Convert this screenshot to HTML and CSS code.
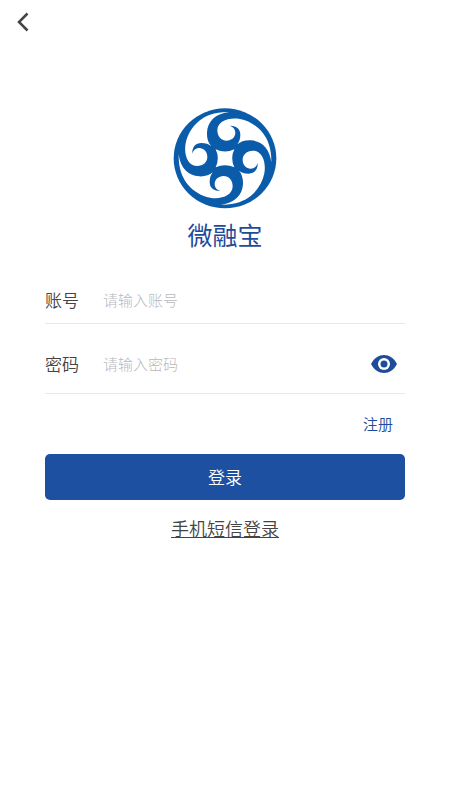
FILE: index.html
```html
<!DOCTYPE html>
<html lang="zh-CN">
<head>
    <meta charset="UTF-8">
    <meta name="viewport" content="width=device-width, initial-scale=1">
    <title>微融宝</title>
    <link rel="stylesheet" href="styles.css">
</head>
<body>

<header class="topbar">
    <button type="button" class="back" aria-label="返回">
        <svg viewBox="0 0 12 20" width="12" height="20"><path d="M10.5 1.5 L2 10 L10.5 18.5"/></svg>
    </button>
</header>

<main class="login">
    <div class="brand">
        <svg class="logo" viewBox="0 0 312 303" aria-hidden="true">
            <defs>
                <path id="swirl" d="M12 -139 C-30 -140 -58 -128 -77 -113 C-100 -94 -113 -70 -118 -45 C-124 -12 -112 23 -84 23 C-65 23 -53 11 -53 -4 C-53 -20 -64 -31 -77 -31 C-88 -31 -95 -24 -98 -14 C-99 -34 -88 -46 -71 -46 C-58 -46 -49 -42 -42 -37 C-50 -46 -55 -60 -54 -78 C-52 -110 -30 -134 12 -139 Z"/>
            </defs>
            <g transform="translate(156 151)">
                <ellipse rx="154" ry="150" fill="#0a5cab"/>
                <g fill="#fff">
                    <use href="#swirl"/>
                    <use href="#swirl" transform="rotate(90)"/>
                    <use href="#swirl" transform="rotate(180)"/>
                    <use href="#swirl" transform="rotate(270)"/>
                    <path d="M-28 -27 Q0 -14 28 -27 Q15 0 28 27 Q0 14 -28 27 Q-15 0 -28 -27 Z"/>
                </g>
            </g>
        </svg>
        <h1>微融宝</h1>
    </div>

    <form>
        <div class="field">
            <label for="account">账号</label>
            <input type="text" id="account" placeholder="请输入账号">
        </div>
        <div class="field field-password">
            <label for="password">密码</label>
            <input type="password" id="password" placeholder="请输入密码">
            <button type="button" class="eye" aria-label="显示密码">
                <svg viewBox="0 0 26 18" width="26" height="18">
                    <path d="M0 9 C3 3 8 0 13 0 C18 0 23 3 26 9 C23 15 18 18 13 18 C8 18 3 15 0 9 Z" fill="#1f4b9b"/>
                    <circle cx="13" cy="9" r="6" fill="#fff"/>
                    <circle cx="13" cy="9" r="3.5" fill="#1f4b9b"/>
                </svg>
            </button>
        </div>
        <div class="links">
            <a href="#">注册</a>
        </div>
        <button type="submit" class="submit">登录</button>
    </form>

    <a href="#" class="sms">手机短信登录</a>
</main>

</body>
</html>
```
FILE: styles.css
```css
* {
    box-sizing: border-box;
}
body {
    margin: 0;
    background: #fff;
    color: #444;
    font-family: "Noto Sans CJK SC", sans-serif;
    font-weight: 350;
}
button {
    padding: 0;
    border: none;
    background: none;
    font-family: inherit;
    font-weight: inherit;
    cursor: pointer;
}
a {
    color: inherit;
    text-decoration: none;
}
svg {
    display: block;
}
.topbar {
    display: flex;
    align-items: center;
    height: 44px;
    padding: 0 17px;
}
.back path {
    fill: none;
    stroke: #444;
    stroke-width: 2.5;
}
.login {
    display: flex;
    flex-direction: column;
    align-items: center;
    padding: 64px 45px 40px;
}
.brand {
    display: flex;
    flex-direction: column;
    align-items: center;
}
.logo {
    width: 104px;
    height: 101px;
}
h1 {
    margin: 7px 0 0;
    font-size: 25px;
    line-height: 36px;
    font-weight: 400;
    color: #1f4b9b;
}
form {
    width: 100%;
    margin-top: 25px;
}
.field {
    display: flex;
    align-items: center;
    height: 47px;
    border-bottom: 1px solid #e8e8e8;
}
.field-password {
    height: 70px;
    padding: 0 8px 12px 0;
    align-items: flex-end;
}
.field label {
    width: 58px;
    font-size: 17px;
    line-height: 34px;
}
.field input {
    flex: 1;
    min-width: 0;
    height: 34px;
    padding: 0 0 2px;
    border: none;
    outline: none;
    background: none;
    color: #444;
    font-family: inherit;
    font-size: 15px;
    font-weight: 300;
}
.field input::placeholder {
    color: #b8b8bc;
}
.eye {
    display: flex;
    align-items: center;
    height: 34px;
}
.links {
    display: flex;
    justify-content: flex-end;
    padding: 18px 12px;
    font-size: 15px;
    line-height: 24px;
    color: #1f4b9b;
}
.submit {
    display: block;
    width: 100%;
    height: 46px;
    padding-bottom: 2px;
    border-radius: 5px;
    background: #1e50a2;
    color: #fff;
    font-size: 17px;
}
.sms {
    margin-top: 15px;
    font-size: 18px;
    line-height: 26px;
    text-decoration: underline;
}
```
